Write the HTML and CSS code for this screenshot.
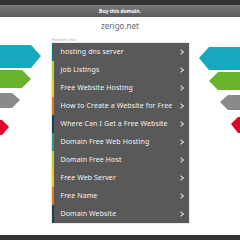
FILE: index.html
```html
<!DOCTYPE html>
<html lang="en">

<head>
    <meta charset="UTF-8">
    <title>zerigo.net</title>
    <link rel="stylesheet" href="styles.css">
</head>

<body>
    <div class="top-bar"></div>
    <div class="buy-bar">Buy this domain.</div>

    <svg class="deco deco-left" width="44" height="92" viewBox="0 0 44 92">
        <polygon points="0,0 31,0 41,11 31,23 0,23" fill="#17a8bd" />
        <polygon points="0,25 22,25 31,34 22,43 0,43" fill="#6ab42d" />
        <polygon points="0,48 12,48 20,55 12,63 0,63" fill="#8a8a8a" />
        <polygon points="0,75 2,75 9,82 2,90 0,90" fill="#e0042c" />
    </svg>

    <svg class="deco deco-right" width="44" height="92" viewBox="0 0 44 92">
        <polygon points="44,0 13,0 3,11 13,23 44,23" fill="#17a8bd" />
        <polygon points="44,25 22,25 13,34 22,43 44,43" fill="#6ab42d" />
        <polygon points="44,48 32,48 24,55 32,63 44,63" fill="#8a8a8a" />
        <polygon points="44,70 42,70 35,77 42,86 44,86" fill="#e0042c" />
    </svg>

    <div class="domain">zerigo.net</div>

    <div class="content">
        <div class="related">Related Links</div>
        <div class="links">
            <a class="link c-teal" href="#">hosting dns server<span class="chev"></span></a>
            <a class="link c-lime" href="#">Job Listings<span class="chev"></span></a>
            <a class="link c-yellow" href="#">Free Website Hosting<span class="chev"></span></a>
            <a class="link c-orange" href="#">How to Create a Website for Free<span class="chev"></span></a>
            <a class="link c-navy" href="#">Where Can I Get a Free Website<span class="chev"></span></a>
            <a class="link c-green" href="#">Domain Free Web Hosting<span class="chev"></span></a>
            <a class="link c-lime" href="#">Domain Free Host<span class="chev"></span></a>
            <a class="link c-yellow" href="#">Free Web Server<span class="chev"></span></a>
            <a class="link c-orange" href="#">Free Name<span class="chev"></span></a>
            <a class="link c-navy" href="#">Domain Website<span class="chev"></span></a>
        </div>
    </div>

    <div class="bottom-bar"></div>
</body>

</html>
```

FILE: styles.css
```css
body {
    margin: 0;
    width: 240px;
    height: 240px;
    position: relative;
    overflow: hidden;
    background: #fff;
    font-family: 'Noto Sans', sans-serif;
    display: flex;
    flex-direction: column;
}

.top-bar {
    height: 5px;
    background: #333;
}

.buy-bar {
    height: 12px;
    line-height: 12px;
    background: linear-gradient(#7a7a7a, #5a5a5a);
    color: #fff;
    font-size: 5px;
    font-weight: bold;
    text-align: center;
}

.deco {
    position: absolute;
    top: 45px;
}

.deco-left {
    left: 0;
}

.deco-right {
    right: 0;
    top: 47px;
}

.domain {
    margin-top: 4px;
    height: 10px;
    line-height: 10px;
    text-align: center;
    font-size: 8px;
    color: #666;
}

.content {
    width: 137px;
    margin: 0 auto;
    position: relative;
}

.related {
    margin-top: 5px;
    height: 7px;
    line-height: 7px;
    font-size: 4px;
    color: #aaa;
}

.links {
    background: #595959;
    box-shadow: 0 0 2px rgba(0, 0, 0, 0.25);
    display: flex;
    flex-direction: column;
}

.link {
    height: 18px;
    line-height: 18px;
    padding: 0 0 0 7px;
    border-left: 2px solid;
    color: #f4f4f4;
    text-decoration: none;
    font-size: 7px;
    letter-spacing: 0.12px;
    white-space: nowrap;
    position: relative;
    overflow: hidden;
}

.chev {
    position: absolute;
    right: 6px;
    top: 7px;
    width: 3px;
    height: 3px;
    border-top: 1px solid #ddd;
    border-right: 1px solid #ddd;
    transform: rotate(45deg);
}

.c-teal { border-color: #1d6e7c; }
.c-lime { border-color: #b9cf3c; }
.c-yellow { border-color: #f2c31c; }
.c-orange { border-color: #e5761d; }
.c-navy { border-color: #16405a; }
.c-green { border-color: #2a9878; }

.bottom-bar {
    margin-top: auto;
    height: 5px;
    background: #333;
}
```
